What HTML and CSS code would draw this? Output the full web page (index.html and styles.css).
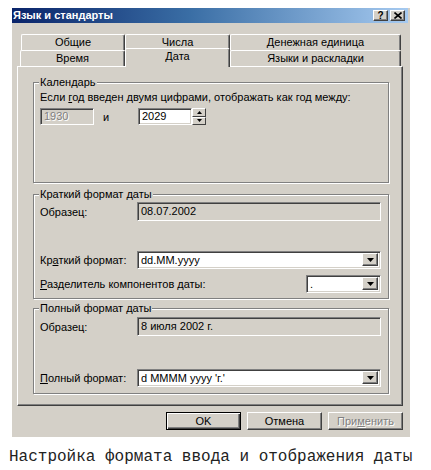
FILE: index.html
```html
<!DOCTYPE html>
<html lang="ru">
<head>
<meta charset="utf-8">
<title>Язык и стандарты</title>
<link rel="stylesheet" href="styles.css">
</head>
<body>
<div class="window">
  <div class="titlebar">
    <span class="title">Язык и стандарты</span>
    <div class="cap-buttons">
      <span class="cap-btn help">?</span>
      <span class="cap-btn close"><svg width="8" height="7" viewBox="0 0 8 7"><path d="M0.5 0.5 L7.5 6.5 M7.5 0.5 L0.5 6.5" stroke="#000" stroke-width="1.6" fill="none"/></svg></span>
    </div>
  </div>
  <div class="sheet">
    <div class="tab-row back">
      <div class="tab t1">Общие</div>
      <div class="tab t2">Числа</div>
      <div class="tab t3">Денежная единица</div>
    </div>
    <div class="tab-row front">
      <div class="tab t1">Время</div>
      <div class="tab t2 selected">Дата</div>
      <div class="tab t3">Языки и раскладки</div>
    </div>
    <div class="panel">
      <div class="group g-cal">
        <div class="group-title">Календарь</div>
        <div class="cal-text">Если <u>г</u>од введен двумя цифрами, отображать как год между:</div>
        <div class="cal-row">
          <div class="edit disabled year">1930</div>
          <span class="and">и</span>
          <div class="edit year">2029</div>
          <div class="spinner">
            <span class="spin"><svg width="5" height="3" viewBox="0 0 5 3"><path d="M2.5 0 L5 3 L0 3 Z" fill="#000"/></svg></span>
            <span class="spin"><svg width="5" height="3" viewBox="0 0 5 3"><path d="M0 0 L5 0 L2.5 3 Z" fill="#000"/></svg></span>
          </div>
        </div>
      </div>

      <div class="group g-short">
        <div class="group-title">Краткий формат даты</div>
        <div class="frow r-sample">
          <span class="lbl">Образец:</span>
          <div class="edit sample">08.07.2002</div>
        </div>
        <div class="frow r-format">
          <span class="lbl">Кр<u>а</u>ткий формат:</span>
          <div class="combo">
            <span class="value">dd.MM.yyyy</span>
            <span class="drop"><svg width="7" height="4" viewBox="0 0 7 4"><path d="M0 0 L7 0 L3.5 4 Z" fill="#000"/></svg></span>
          </div>
        </div>
        <div class="frow r-sep">
          <span class="lbl wide"><u>Р</u>азделитель компонентов даты:</span>
          <div class="combo small">
            <span class="value">.</span>
            <span class="drop"><svg width="7" height="4" viewBox="0 0 7 4"><path d="M0 0 L7 0 L3.5 4 Z" fill="#000"/></svg></span>
          </div>
        </div>
      </div>

      <div class="group g-long">
        <div class="group-title">Полный формат даты</div>
        <div class="frow r-sample2">
          <span class="lbl">Образец:</span>
          <div class="edit sample">8 июля 2002 г.</div>
        </div>
        <div class="frow r-format2">
          <span class="lbl"><u>П</u>олный формат:</span>
          <div class="combo">
            <span class="value">d MMMM yyyy 'г.'</span>
            <span class="drop"><svg width="7" height="4" viewBox="0 0 7 4"><path d="M0 0 L7 0 L3.5 4 Z" fill="#000"/></svg></span>
          </div>
        </div>
      </div>
    </div>
    <div class="buttons">
      <div class="btn default">OK</div>
      <div class="btn">Отмена</div>
      <div class="btn disabled">При<u>м</u>енить</div>
    </div>
  </div>
</div>
<div class="caption">Настройка формата ввода и отображения даты</div>
</body>
</html>
```

FILE: styles.css
```css
* { box-sizing: border-box; }
html, body { margin: 0; background: #fff; }
body {
  font-family: "Liberation Sans", Arial, sans-serif;
  font-size: 11px;
  color: #000;
}
u { text-decoration: underline; text-underline-offset: 1px; }

.window {
  margin: 8px 0 0 12px;
  width: 398px;
  background: #d4d0c8;
  padding-bottom: 7px;
}

.titlebar {
  height: 15px;
  margin-right: 2px;
  display: flex;
  align-items: center;
  justify-content: space-between;
  background: linear-gradient(to right, #0a246a 0%, #3a6ea5 45%, #a6caf0 100%);
  padding: 0 3px 0 1px;
}
.title {
  color: #fff;
  font-weight: bold;
  font-size: 11px;
  line-height: 13px;
  white-space: nowrap;
}
.cap-buttons { display: flex; gap: 2px; }
.cap-btn {
  width: 15px;
  height: 11px;
  background: #d4d0c8;
  border: 1px solid;
  border-color: #fff #404040 #404040 #fff;
  box-shadow: inset -1px -1px #808080;
  display: flex;
  align-items: center;
  justify-content: center;
  font-weight: bold;
  font-size: 10px;
  line-height: 9px;
}

.sheet {
  display: flex;
  flex-direction: column;
  padding: 11px 7px 0 5px;
}

.tab-row {
  display: flex;
  height: 16px;
  margin-left: 3px;
}
.tab-row.back { margin-left: 4px; }
.tab-row.front { z-index: 1; }
.tab {
  height: 16px;
  border-top: 1px solid #fff;
  border-left: 1px solid #fff;
  border-right: 1px solid #404040;
  box-shadow: inset -1px 0 #808080;
  border-radius: 2px 2px 0 0;
  background: #d4d0c8;
  text-align: center;
  line-height: 15px;
  white-space: nowrap;
}
.back .t1 { width: 104px; }
.t1 { width: 105px; }
.t2 { width: 105px; }
.t3 { width: 171px; }
.tab.selected {
  align-self: flex-start;
  height: 19px;
  margin-top: -2px;
  margin-bottom: -1px;
  line-height: 15px;
}

.panel {
  height: 340px;
  border: 1px solid;
  border-color: #fff #404040 #404040 #fff;
  box-shadow: inset -1px -1px #808080;
  padding: 15px 0 0 15px;
}

.group {
  width: 356px;
  border: 1px solid #808080;
  box-shadow: inset 1px 1px #fff, 1px 1px #fff;
  padding: 0 7px 0 6px;
}
.group-title {
  width: fit-content;
  margin-top: -7px;
  margin-left: -1px;
  padding: 0 1px;
  background: #d4d0c8;
  line-height: 12px;
  white-space: nowrap;
}
.g-cal { height: 101px; }
.g-short { height: 105px; margin-top: 11px; }
.g-long { height: 86px; margin-top: 9px; }

.cal-text { margin-top: 3px; line-height: 12px; white-space: nowrap; }
.cal-row {
  display: flex;
  align-items: center;
  margin-top: 5px;
  height: 17px;
}

.edit {
  height: 17px;
  border: 1px solid;
  border-color: #808080 #fff #fff #808080;
  box-shadow: inset 1px 1px #404040, inset -1px -1px #d4d0c8;
  background: #fff;
  padding: 0 3px;
  line-height: 15px;
  white-space: nowrap;
}
.edit.year { width: 54px; }
.edit.disabled {
  background: #d4d0c8;
  color: #808080;
  text-shadow: 1px 1px #fff;
}
.and { width: 44px; padding-left: 9px; }

.spinner {
  width: 14px;
  height: 17px;
  display: flex;
  flex-direction: column;
}
.spin {
  flex: 1;
  background: #d4d0c8;
  border: 1px solid;
  border-color: #fff #404040 #404040 #fff;
  display: flex;
  align-items: center;
  justify-content: center;
}

.frow { display: flex; align-items: center; white-space: nowrap; }
.lbl { width: 97px; flex: none; }
.lbl.wide { width: auto; flex: 1; }
.edit.sample {
  flex: 1;
  height: 19px;
  background: #d4d0c8;
  line-height: 17px;
}
.r-sample { margin-top: 2px; }
.r-format { margin-top: 30px; }
.r-sep { margin-top: 6px; }
.r-sample2 { margin-top: 3px; }
.r-format2 { margin-top: 33px; }

.combo {
  flex: 1;
  height: 18px;
  display: flex;
  border: 1px solid;
  border-color: #808080 #fff #fff #808080;
  box-shadow: inset 1px 1px #404040, inset -1px -1px #d4d0c8;
  background: #fff;
  padding: 1px 2px 2px 1px;
}
.combo.small { flex: none; width: 75px; }
.combo .value { flex: 1; padding-left: 2px; line-height: 14px; }
.drop {
  width: 16px;
  background: #d4d0c8;
  border: 1px solid;
  border-color: #fff #404040 #404040 #fff;
  box-shadow: inset -1px -1px #808080;
  display: flex;
  align-items: center;
  justify-content: center;
}

.buttons {
  display: flex;
  justify-content: flex-end;
  gap: 6px;
  margin-top: 6px;
}
.btn {
  width: 75px;
  height: 18px;
  border: 1px solid;
  border-color: #fff #404040 #404040 #fff;
  box-shadow: inset -1px -1px #808080;
  text-align: center;
  line-height: 16px;
}
.btn.default {
  border-color: #000;
  box-shadow: inset 1px 1px #fff, inset -1px -1px #404040, inset -2px -2px #808080;
}
.btn.disabled { color: #808080; text-shadow: 1px 1px #fff; }

.caption {
  font-family: "Liberation Mono", "Courier New", monospace;
  font-size: 16px;
  line-height: 18px;
  margin: 11px 0 0 9px;
  color: #222;
  white-space: nowrap;
}
```
